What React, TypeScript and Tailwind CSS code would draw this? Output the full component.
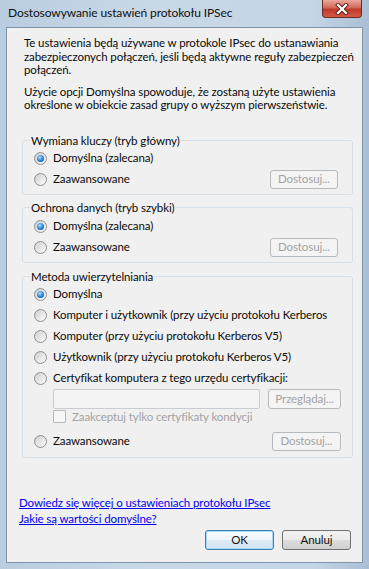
import React from 'react';

function Radio({ checked }: { checked?: boolean }) {
  return (
    <span className="flex h-[13px] w-[13px] shrink-0 items-center justify-center rounded-full border border-[#8e8f8f] bg-[linear-gradient(135deg,#cfcfcf,#fbfbfb)]">
      {checked && (
        <span className="h-[7px] w-[7px] rounded-full bg-[radial-gradient(circle_at_40%_35%,#b4e3ff,#2a86d8_50%,#0a4c95)]" />
      )}
    </span>
  );
}

function DisabledButton({ label, width }: { label: string; width: string }) {
  return (
    <div
      className={`flex h-[19px] items-center justify-center rounded-[3px] border border-[#b5babe] bg-[#f4f4f4] text-[#a3a3a3] ${width}`}
    >
      {label}
    </div>
  );
}

function Option({ label, checked, children }: { label: string; checked?: boolean; children?: React.ReactNode }) {
  return (
    <div className="flex h-[21px] items-center gap-[6px] pl-[4px]">
      <Radio checked={checked} />
      <span className="whitespace-nowrap">{label}</span>
      {children}
    </div>
  );
}

function Group({ title, className, children }: { title: string; className?: string; children: React.ReactNode }) {
  return (
    <fieldset className={`ml-[15px] mr-[9px] rounded-[3px] border border-[#d5dfe5] pl-[7px] pr-[6px] ${className ?? ''}`}>
      <legend className="px-[1px] leading-[14px]">{title}</legend>
      {children}
    </fieldset>
  );
}

export default function App() {
  return (
    <div className="flex h-[569px] w-[369px] flex-col overflow-hidden bg-[linear-gradient(90deg,#b9cde0,#c8d8e7_40%,#c4d5e6_85%,#a9bfd5)] font-['Segoe_UI','Lato',sans-serif] text-[11.5px] tracking-[-0.1px] text-[#0a0a0a]">
      {/* title bar */}
      <div className="flex h-[27px] shrink-0 items-start justify-between">
        <span className="pl-[8px] pt-[5px] text-[12px] leading-[16px] text-[#111]">Dostosowywanie ustawień protokołu IPSec</span>
        <div className="mr-[7px] flex h-[18px] w-[40px] items-center justify-center rounded-b-[4px] border border-t-0 border-[#6e2a22] bg-[linear-gradient(180deg,#e9a99b,#d1685a_45%,#c0392b_55%,#d45a45)]">
          <svg width="14" height="12" viewBox="0 0 14 12">
            <path d="M3 2 L11 10 M11 2 L3 10" stroke="#5a1d16" strokeWidth="4" strokeLinecap="square" />
            <path d="M3 2 L11 10 M11 2 L3 10" stroke="#ffffff" strokeWidth="2.2" strokeLinecap="square" />
          </svg>
        </div>
      </div>

      {/* client area */}
      <div className="mx-[6px] mb-[6px] flex flex-1 flex-col border border-[#7f93a6] bg-[#f0f0f0]">
        <div className="pl-[17px] pt-[8px] leading-[13.5px]">
          <p className="whitespace-nowrap">
            Te ustawienia będą używane w protokole IPsec do ustanawiania
            <br />
            zabezpieczonych połączeń, jeśli będą aktywne reguły zabezpieczeń
            <br />
            połączeń.
          </p>
          <p className="mt-[8px] whitespace-nowrap">
            Użycie opcji Domyślna spowoduje, że zostaną użyte ustawienia
            <br />
            określone w obiekcie zasad grupy o wyższym pierwszeństwie.
          </p>
        </div>

        <Group title="Wymiana kluczy (tryb główny)" className="mt-[22px] pb-[4px]">
          <Option label="Domyślna (zalecana)" checked />
          <Option label="Zaawansowane">
            <div className="ml-auto mr-[8px]">
              <DisabledButton label="Dostosuj..." width="w-[68px]" />
            </div>
          </Option>
        </Group>

        <Group title="Ochrona danych (tryb szybki)" className="mt-[6px] pb-[4px] pt-[1px]">
          <Option label="Domyślna (zalecana)" checked />
          <Option label="Zaawansowane">
            <div className="ml-auto mr-[8px]">
              <DisabledButton label="Dostosuj..." width="w-[68px]" />
            </div>
          </Option>
        </Group>

        <Group title="Metoda uwierzytelniania" className="mt-[7px] pb-[5px]">
          <Option label="Domyślna" checked />
          <Option label="Komputer i użytkownik (przy użyciu protokołu Kerberos" />
          <Option label="Komputer (przy użyciu protokołu Kerberos V5)" />
          <Option label="Użytkownik (przy użyciu protokołu Kerberos V5)" />
          <Option label="Certyfikat komputera z tego urzędu certyfikacji:" />
          <div className="flex h-[20px] items-center gap-[7px] pl-[23px] pr-[5px]">
            <div className="h-[20px] w-[207px] rounded-[2px] border border-[#c9cdd1] bg-[#f4f4f4]" />
            <div className="ml-auto">
              <DisabledButton label="Przeglądaj..." width="w-[73px] h-[20px]" />
            </div>
          </div>
          <div className="flex h-[16px] items-center gap-[6px] pl-[23px] text-[#a3a3a3]">
            <span className="h-[13px] w-[13px] shrink-0 rounded-[1px] border border-[#b9b9b9] bg-[#f6f6f6]" />
            <span className="whitespace-nowrap">Zaakceptuj tylko certyfikaty kondycji</span>
          </div>
          <div className="mt-[6px]">
            <Option label="Zaawansowane">
              <div className="ml-auto mr-[5px]">
                <DisabledButton label="Dostosuj..." width="w-[69px]" />
              </div>
            </Option>
          </div>
        </Group>

        <div className="mt-auto pb-[12px] pl-[12px] pr-[11px]">
          <div className="flex flex-col items-start leading-[16px] text-[#0000ee]">
            <a className="underline">Dowiedz się więcej o ustawieniach protokołu IPsec</a>
            <a className="underline">Jakie są wartości domyślne?</a>
          </div>
          <div className="mt-[3px] flex justify-end gap-[8px]">
            <button className="h-[20px] w-[69px] rounded-[3px] border border-[#3c7fb1] bg-[linear-gradient(180deg,#f7fbfe,#eef5fa_50%,#dcebf5_51%,#d4e6f3)] shadow-[inset_0_0_0_1px_#a8d8f5] text-[#111]">
              OK
            </button>
            <button className="h-[20px] w-[69px] rounded-[3px] border border-[#707070] bg-[linear-gradient(180deg,#f2f2f2,#ebebeb_50%,#dddddd_51%,#cfcfcf)] text-[#111]">
              Anuluj
            </button>
          </div>
        </div>
      </div>
    </div>
  );
}
